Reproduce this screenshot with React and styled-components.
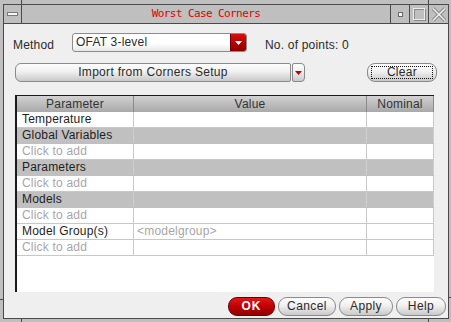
import React from "react";
import styled, { createGlobalStyle } from "styled-components";

const GlobalStyle = createGlobalStyle`
  html, body { margin: 0; padding: 0; background: #bfbfbf; }
  body { font-family: "Liberation Sans", Arial, sans-serif; color: #2a2a2a; }
  * { box-sizing: border-box; }
`;

const Frame = styled.div`
  position: relative;
  width: 451px;
  height: 322px;
  background: #bfbfbf;
  padding: 4px 2px 3px 3px;
  display: flex;
`;

const Notch = styled.span`
  position: absolute;
  background: #4a4a4a;
  ${(p) => (p.$v ? `width:1px;height:${p.$len}px;` : `height:1px;width:${p.$len}px;`)}
`;

const Window = styled.div`
  flex: 1;
  display: flex;
  flex-direction: column;
  border: 1px solid #4a4a4a;
`;

const TitleBar = styled.div`
  display: flex;
  height: 19px;
  border-bottom: 1px solid #4a4a4a;
  background: #bfbfbf;
`;

const TitleBtn = styled.div`
  width: ${(p) => p.$w}px;
  flex: none;
  display: flex;
  ${(p) => (p.$left ? "border-right: 1px solid #4a4a4a;" : "border-left: 1px solid #4a4a4a;")}
  box-sizing: content-box;
`;

const Title = styled.div`
  flex: 1;
  text-align: center;
  font-family: "DejaVu Sans Mono", "Liberation Mono", monospace;
  font-size: 11px;
  letter-spacing: -0.6px;
  line-height: 18px;
  color: #e00000;
`;

const Content = styled.div`
  flex: 1;
  background: #efefef;
  display: flex;
  flex-direction: column;
  padding: 9px 2px 0 0;
`;

const MethodRow = styled.div`
  display: flex;
  align-items: flex-start;
  height: 19px;
  padding-left: 9px;
  margin-bottom: 11px;
`;

const Label = styled.div`
  width: ${(p) => p.$w || "auto"};
  margin-left: ${(p) => p.$ml || 0}px;
  padding-top: 5px;
  font-size: 12px;
  line-height: 15px;
  letter-spacing: 0.2px;
  white-space: nowrap;
`;

const Combo = styled.div`
  width: 175px;
  height: 19px;
  display: flex;
  border: 1px solid #8c8c8c;
  border-radius: 3px;
  overflow: hidden;
  background: linear-gradient(#ffffff, #ffffff 55%, #e6e6e6);
`;

const ComboText = styled.div`
  flex: 1;
  padding-left: 3px;
  font-size: 12px;
  line-height: 17px;
  letter-spacing: 0.2px;
`;

const ComboArrow = styled.div`
  width: 16px;
  display: flex;
  align-items: center;
  justify-content: center;
  background: linear-gradient(#d81010, #b00000 60%, #8c0000);
  border-left: 1px solid #7a0000;
`;

const ImportRow = styled.div`
  display: flex;
  height: 19px;
  padding-left: 11px;
  margin-bottom: 13px;
`;

const GrayButton = styled.div`
  height: 19px;
  width: ${(p) => p.$w}px;
  margin-left: ${(p) => p.$ml || 0}px;
  display: flex;
  align-items: center;
  justify-content: center;
  border: 1px solid #8a8a8a;
  border-radius: ${(p) => p.$r};
  background: linear-gradient(#fdfdfd, #f0f0f0 45%, #c9c9c9);
  font-size: 12px;
  line-height: 17px;
  letter-spacing: 0.3px;
  color: #2a2a2a;
`;

const Focus = styled.span`
  display: flex;
  align-items: center;
  justify-content: center;
  width: calc(100% - 6px);
  height: calc(100% - 4px);
  border: 1px dotted #111;
  line-height: 13px;
`;

const Table = styled.div`
  width: 419px;
  height: 197px;
  margin-left: 11px;
  border-left: 2px solid #1a1a1a;
  border-top: 1px solid #1a1a1a;
  background: #ffffff;
  display: flex;
  flex-direction: column;
`;

const Row = styled.div`
  display: grid;
  grid-template-columns: 117px 233px 67px;
  height: 16px;
  background: ${(p) => (p.$group ? "#c0c0c0" : "#ffffff")};
  border-bottom: 1px solid ${(p) => (p.$group ? "#c0c0c0" : "#c8c8c8")};
`;

const HeadRow = styled.div`
  display: grid;
  grid-template-columns: 117px 233px 67px;
  height: 16px;
  background: linear-gradient(#d2d2d2, #bdbdbd 50%, #a9a9a9);
`;

const HeadCell = styled.div`
  border-right: 1px solid #8a8a8a;
  text-align: center;
  font-size: 12px;
  line-height: 16px;
  letter-spacing: 0.2px;
  color: #333;
`;

const Cell = styled.div`
  border-right: 1px solid ${(p) => (p.$group ? "#cdcdcd" : "#c8c8c8")};
  padding-left: ${(p) => p.$pl ?? 5}px;
  font-size: 12px;
  line-height: 15px;
  letter-spacing: 0.2px;
  white-space: nowrap;
  overflow: hidden;
  color: ${(p) => (p.$muted ? "#a6a6a6" : "#1e1e1e")};
`;

const ButtonRow = styled.div`
  display: flex;
  justify-content: flex-end;
  gap: 3px;
  margin-top: 5px;
  height: 19px;
`;

const Pill = styled.div`
  width: ${(p) => p.$w}px;
  height: 19px;
  display: flex;
  align-items: center;
  justify-content: center;
  border-radius: 9px;
  border: 1px solid ${(p) => (p.$primary ? "#6a0000" : "#8a8a8a")};
  background: ${(p) =>
    p.$primary
      ? "linear-gradient(#e01818, #c00000 50%, #900000)"
      : "linear-gradient(#fdfdfd, #f0f0f0 45%, #c9c9c9)"};
  color: ${(p) => (p.$primary ? "#ffffff" : "#2a2a2a")};
  font-weight: ${(p) => (p.$primary ? 700 : 400)};
  font-size: 12px;
  line-height: 17px;
  letter-spacing: ${(p) => (p.$primary ? "1px" : "0.4px")};
`;

const rows = [
  { p: "Temperature" },
  { p: "Global Variables", group: true },
  { p: "Click to add", muted: true },
  { p: "Parameters", group: true },
  { p: "Click to add", muted: true },
  { p: "Models", group: true },
  { p: "Click to add", muted: true },
  { p: "Model Group(s)", v: "<modelgroup>" },
  { p: "Click to add", muted: true },
];

export default function App() {
  return (
    <>
      <GlobalStyle />
      <Frame>
        <Notch $v $len={4} style={{ left: 21, top: 0 }} />
        <Notch $v $len={4} style={{ left: 428, top: 0 }} />
        <Notch $v $len={4} style={{ left: 21, top: 318 }} />
        <Notch $v $len={4} style={{ left: 428, top: 318 }} />
        <Notch $len={3} style={{ left: 0, top: 299 }} />
        <Notch $len={3} style={{ left: 448, top: 297 }} />
        <Window>
          <TitleBar>
            <TitleBtn $left $w={17}>
              <svg width="17" height="18">
                <rect x="3.5" y="7.5" width="10" height="3" fill="#f6f6f6" stroke="#7a7a7a" />
              </svg>
            </TitleBtn>
            <Title>Worst Case Corners</Title>
            <TitleBtn $w={18}>
              <svg width="18" height="18">
                <rect x="7.5" y="7.5" width="4" height="4" fill="#f6f6f6" stroke="#6a6a6a" />
              </svg>
            </TitleBtn>
            <TitleBtn $w={18}>
              <svg width="18" height="18">
                <rect x="4.5" y="4.5" width="11" height="11" fill="none" stroke="#8a8a8a" />
                <rect x="3.5" y="3.5" width="11" height="11" fill="none" stroke="#ececec" />
              </svg>
            </TitleBtn>
            <TitleBtn $w={19}>
              <svg width="19" height="18">
                <path d="M4 3.5 L16 15.5 M16 3.5 L4 15.5" stroke="#8a8a8a" strokeWidth="3.6" fill="none" />
                <path d="M4 3.5 L16 15.5 M16 3.5 L4 15.5" stroke="#ececec" strokeWidth="1.6" fill="none" />
              </svg>
            </TitleBtn>
          </TitleBar>
          <Content>
            <MethodRow>
              <Label $w="59px">Method</Label>
              <Combo>
                <ComboText>OFAT 3-level</ComboText>
                <ComboArrow>
                  <svg width="7" height="4">
                    <polygon points="0,0 7,0 3.5,4" fill="#ffffff" />
                  </svg>
                </ComboArrow>
              </Combo>
              <Label $ml={18}>No. of points: 0</Label>
            </MethodRow>
            <ImportRow>
              <GrayButton $w={276} $r="6px 2px 2px 6px">
                Import from Corners Setup
              </GrayButton>
              <GrayButton $w={13} $ml={1} $r="2px 4px 4px 2px">
                <svg width="7" height="4">
                  <polygon points="0,0 7,0 3.5,4" fill="#c00000" />
                </svg>
              </GrayButton>
              <GrayButton $w={70} $ml={62} $r="8px">
                <Focus>Clear</Focus>
              </GrayButton>
            </ImportRow>
            <Table>
              <HeadRow>
                <HeadCell>Parameter</HeadCell>
                <HeadCell>Value</HeadCell>
                <HeadCell>Nominal</HeadCell>
              </HeadRow>
              {rows.map((r, i) => (
                <Row key={i} $group={r.group}>
                  <Cell $group={r.group} $muted={r.muted}>
                    {r.p}
                  </Cell>
                  <Cell $group={r.group} $muted $pl={3}>
                    {r.v || ""}
                  </Cell>
                  <Cell $group={r.group} />
                </Row>
              ))}
            </Table>
            <ButtonRow>
              <Pill $primary $w={47}>OK</Pill>
              <Pill $w={58}>Cancel</Pill>
              <Pill $w={54}>Apply</Pill>
              <Pill $w={50}>Help</Pill>
            </ButtonRow>
          </Content>
        </Window>
      </Frame>
    </>
  );
}
